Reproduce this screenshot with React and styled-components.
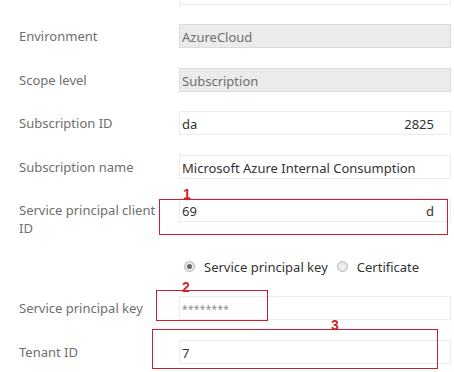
import React from "react";
import styled, { createGlobalStyle } from "styled-components";

const GlobalStyle = createGlobalStyle`
  body {
    margin: 0;
    background: #fff;
    font-family: "Noto Sans", "Open Sans", sans-serif;
    overflow: hidden;
  }
`;

const Page = styled.div`
  position: relative;
  width: 454px;
  height: 372px;
  overflow: hidden;
`;

const Form = styled.div`
  display: flex;
  flex-direction: column;
  gap: 19.5px;
  margin-top: -19.5px;
`;

const Row = styled.div`
  display: flex;
  align-items: flex-start;
`;

const Label = styled.div`
  width: 142px;
  padding: 3px 18px 0 19px;
  font-size: 13px;
  line-height: 18px;
  color: #6e6e6e;
  flex-shrink: 0;
`;

const Field = styled.div`
  box-sizing: border-box;
  width: 272px;
  height: 24px;
  display: flex;
  align-items: ${(p) => (p.cut ? "flex-start" : "center")};
  justify-content: ${(p) => (p.cut ? "flex-end" : "space-between")};
  padding: ${(p) => (p.cut ? "0 28px 0 2px" : "2px 16px 0 2px")};
  border: 1px solid ${(p) => (p.disabled ? "#dcdcdc" : "#ececec")};
  background: ${(p) => (p.disabled ? "#ebebeb" : "#fff")};
  color: ${(p) => (p.disabled ? "#6e6e6e" : "#333")};
  font-size: 13px;
  line-height: 18px;
  white-space: nowrap;
  overflow: hidden;
`;

const Secret = styled.span`
  color: #8a8a8a;
  font-size: 10px;
  letter-spacing: 0.4px;
`;

const RadioRow = styled.div`
  display: flex;
  align-items: center;
  height: 20px;
  padding-left: 184px;
  font-size: 13px;
  color: #333;
`;

const Radio = styled.span`
  box-sizing: border-box;
  width: 11px;
  height: 11px;
  border-radius: 50%;
  border: 1px solid #b5b5b5;
  background: radial-gradient(circle, #f4f4f4 0%, #dedede 100%);
  margin-right: 9px;
  display: flex;
  align-items: center;
  justify-content: center;

  &::after {
    content: "";
    width: 5px;
    height: 5px;
    border-radius: 50%;
    background: ${(p) => (p.checked ? "#6a6a6a" : "transparent")};
  }
`;

const RadioText = styled.span`
  margin-right: 9px;
`;

const Callout = styled.div`
  position: absolute;
  left: ${(p) => p.x}px;
  top: ${(p) => p.y}px;
  width: ${(p) => p.w}px;
  height: ${(p) => p.h}px;
  border: 1px solid #c8202e;
  box-sizing: border-box;
`;

const Num = styled.span`
  position: absolute;
  left: ${(p) => p.x}px;
  top: ${(p) => p.y}px;
  color: #d51f26;
  font-family: "Liberation Sans", Arial, sans-serif;
  font-weight: bold;
  font-size: 14px;
  line-height: 1;
`;

export default function App() {
  return (
    <Page>
      <GlobalStyle />
      <Form>
        <Row>
          <Label>&nbsp;</Label>
          <Field cut>Consumption (</Field>
        </Row>
        <Row>
          <Label>Environment</Label>
          <Field disabled>AzureCloud</Field>
        </Row>
        <Row>
          <Label>Scope level</Label>
          <Field disabled>Subscription</Field>
        </Row>
        <Row>
          <Label>Subscription ID</Label>
          <Field>
            <span>da</span>
            <span>2825</span>
          </Field>
        </Row>
        <Row>
          <Label>Subscription name</Label>
          <Field>Microsoft Azure Internal Consumption</Field>
        </Row>
        <Row>
          <Label>Service principal client ID</Label>
          <Field>
            <span>69</span>
            <span>d</span>
          </Field>
        </Row>
        <RadioRow>
          <Radio checked />
          <RadioText>Service principal key</RadioText>
          <Radio />
          <RadioText>Certificate</RadioText>
        </RadioRow>
        <Row>
          <Label>Service principal key</Label>
          <Field>
            <Secret>********</Secret>
          </Field>
        </Row>
        <Row>
          <Label>Tenant ID</Label>
          <Field>7</Field>
        </Row>
      </Form>

      <Callout x={159} y={199} w={289} h={36} />
      <Num x={183} y={187}>1</Num>
      <Callout x={156} y={290} w={112} h={31} />
      <Num x={182} y={280}>2</Num>
      <Callout x={152} y={329} w={286} h={40} />
      <Num x={331} y={318}>3</Num>
    </Page>
  );
}
